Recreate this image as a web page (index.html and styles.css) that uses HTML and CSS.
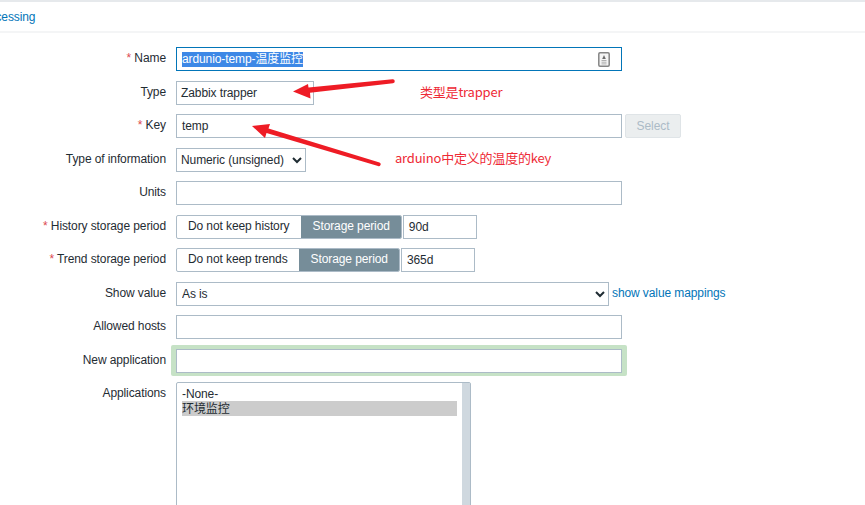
FILE: index.html
```html
<!DOCTYPE html>
<html lang="en">
<head>
<meta charset="utf-8">
<title>Item</title>
<link rel="stylesheet" href="styles.css">
</head>
<body>
<div class="page">
  <div class="tabs"><a class="tab" href="#">Preprocessing</a></div>
  <form class="form">
    <label class="label"><span class="req">*</span> Name</label>
    <div class="field name-field">
      <div class="control focus"><span class="sel">ardunio-temp-温度监控</span></div>
      <svg class="key-icon" width="12" height="15" viewBox="0 0 12 15">
        <rect x="0.8" y="0.8" width="10.400" height="13.400" rx="1.200" fill="#f4f4f4" stroke="#858585" stroke-width="1.500"/>
        <path d="M6 3 7.800 7H4.200Z" fill="#6a6a6a"/>
        <path d="M3.500 8.500h5M3.500 10.200h5M3.500 11.900h5" stroke="#b0b0b0" stroke-width="1"/>
      </svg>
    </div>

    <label class="label">Type</label>
    <div class="field"><div class="control type">Zabbix trapper</div></div>

    <label class="label"><span class="req">*</span> Key</label>
    <div class="field">
      <div class="control wide pad">temp</div>
      <button class="select-btn" type="button" disabled>Select</button>
    </div>

    <label class="label">Type of information</label>
    <div class="field"><select class="native info"><option>Numeric (unsigned)</option></select></div>

    <label class="label">Units</label>
    <div class="field"><input class="control wide" type="text"></div>

    <label class="label"><span class="req">*</span> History storage period</label>
    <div class="field">
      <div class="seg"><span class="seg-off">Do not keep history</span><span class="seg-on">Storage period</span></div>
      <div class="control period">90d</div>
    </div>

    <label class="label"><span class="req">*</span> Trend storage period</label>
    <div class="field">
      <div class="seg"><span class="seg-off">Do not keep trends</span><span class="seg-on">Storage period</span></div>
      <div class="control period">365d</div>
    </div>

    <label class="label">Show value</label>
    <div class="field">
      <select class="native show"><option>As is</option></select>
      <a class="link" href="#">show value mappings</a>
    </div>

    <label class="label">Allowed hosts</label>
    <div class="field"><input class="control wide" type="text"></div>

    <label class="label">New application</label>
    <div class="field"><div class="green"><input class="control wide" type="text"></div></div>

    <label class="label">Applications</label>
    <div class="listbox">
      <div class="options">
        <div class="opt first">-None-</div>
        <div class="opt picked">环境监控</div>
      </div>
      <div class="scroll"></div>
    </div>
  </form>
</div>

<svg class="arrows" width="865" height="505" viewBox="0 0 865 505">
  <path d="M293 91.500 308 84 308.500 87.500 392.500 79.300A2 2 0 0 1 393 83.300L310 92.800 310.500 98.500Z" fill="#ee1c25"/>
  <path d="M252 126 270 124 268.500 128.500 379.500 162.500A1.800 1.800 0 0 1 378 166L266.500 133 265 138Z" fill="#ee1c25"/>
</svg>
<span class="note note-type">类型是trapper</span>
<span class="note note-key">arduino中定义的温度的key</span>
</body>
</html>
```
FILE: styles.css
```css
* { box-sizing: border-box; }
html, body { margin: 0; height: 100%; overflow: hidden; background: #fff; }
body {
  font-family: "Liberation Sans", Arial, "Noto Sans CJK SC", sans-serif;
  font-size: 12px;
  letter-spacing: -0.1px;
  color: #1f2c33;
}
.page { width: 865px; height: 505px; overflow: hidden; }
.tabs {
  height: 33px;
  border-top: 2px solid #e6e9ec;
  border-bottom: 2px solid #f4f5f6;
  display: flex;
  align-items: center;
  overflow: hidden;
}
.tab { margin-left: -40px; color: #0275b8; text-decoration: none; white-space: nowrap; }
.form {
  display: grid;
  grid-template-columns: 166px 1fr;
  column-gap: 10px;
  row-gap: 9.5px;
  grid-auto-rows: 24px;
  padding-top: 14px;
}
.label { text-align: right; line-height: 23.7px; color: #1f2c33; white-space: nowrap; }
.req { color: #dc4a50; }
.field { display: flex; align-items: stretch; position: relative; height: 24px; }
.control {
  height: 24px;
  border: 1px solid #acbbc7;
  background: #fff;
  font: inherit;
  letter-spacing: inherit;
  color: inherit;
  line-height: 22px;
  padding: 0 5px;
  display: block;
  border-radius: 0;
  outline: 0;
}
.wide { width: 446px; }
.focus { width: 446px; border-color: #0275b8; }
.sel { background: #3d88e6; color: #fff; display: inline-block; line-height: 15px; }
.key-icon { position: absolute; left: 422px; top: 5px; }
.type { width: 138px; padding-left: 4px; }
.select-btn {
  width: 56px;
  margin-left: 3px;
  border: 1px solid #dfe4e7;
  border-radius: 2px;
  background: #ebeeef;
  color: #acbbc7;
  font: inherit;
  letter-spacing: inherit;
  padding: 0;
}
.native {
  height: 24px;
  border: 1px solid #acbbc7;
  background: #fff;
  font: inherit;
  letter-spacing: inherit;
  color: inherit;
  padding: 0;
  border-radius: 0;
}
.info { width: 130px; }
.show { width: 433px; padding-left: 1px; }
.seg {
  display: flex;
  height: 24px;
  border: 1px solid #acbbc7;
  border-radius: 2px;
  overflow: hidden;
}
.seg-off { padding: 0 11px; line-height: 21px; white-space: nowrap; }
.seg-on {
  padding: 0 11px 0 12px;
  line-height: 21px;
  background: #768d99;
  color: #fff;
  white-space: nowrap;
}
.period { width: 74px; margin-left: 1px; }
.link { margin-left: 3px; line-height: 23px; color: #0275b8; text-decoration: none; white-space: nowrap; }
.green {
  margin: -3.5px -5px;
  padding: 3.5px 5px;
  background: #c6e2c6;
  border-radius: 2px;
  height: 31px;
}
.listbox {
  width: 295px;
  height: 340px;
  border: 1px solid #acbbc7;
  border-radius: 2px 2px 0 0;
  display: flex;
  background: #fff;
}
.options { flex: 1; padding: 4px 5px 0 5px; }
.opt { height: 15px; line-height: 15px; white-space: nowrap; }
.first { height: 14px; }
.picked { background: #cccccc; line-height: 16px; }
.scroll { width: 8px; background: #cfd8df; }
.arrows { position: absolute; left: 0; top: 0; pointer-events: none; }
.note {
  position: absolute;
  font-family: "Noto Sans CJK SC", "Liberation Sans", sans-serif;
  font-size: 13px;
  letter-spacing: -0.2px;
  line-height: 18px;
  color: #ee2a35;
  white-space: nowrap;
}
.note-type { left: 420px; top: 83px; }
.note-key { left: 395px; top: 149px; }
```
